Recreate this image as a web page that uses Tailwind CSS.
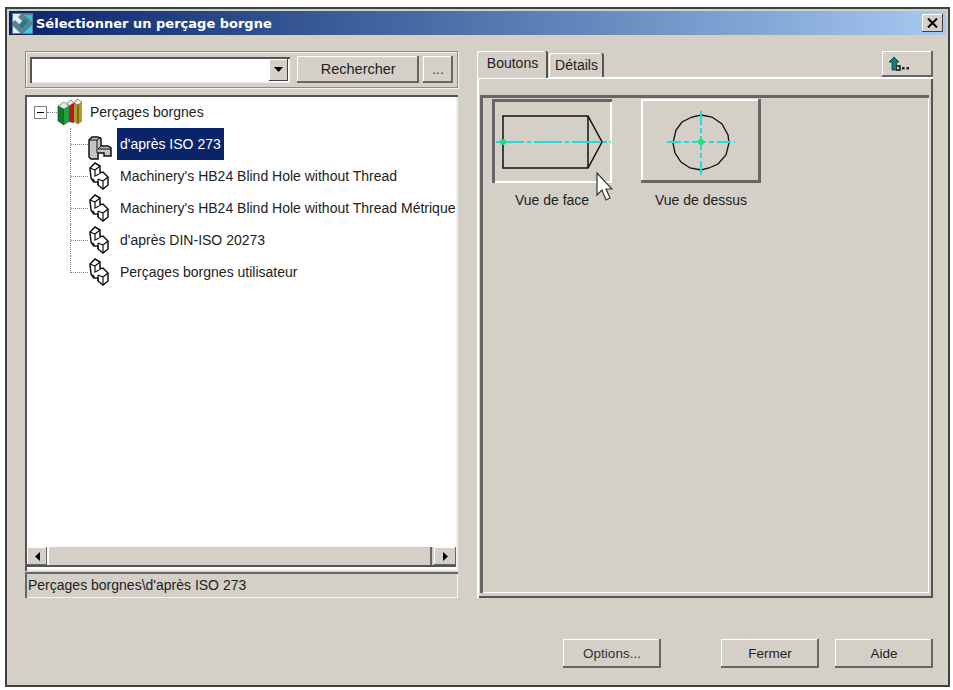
<!DOCTYPE html>
<html lang="fr">
<head>
  <meta charset="UTF-8" />
  <title>Sélectionner un perçage borgne</title>
  <script src="https://cdn.jsdelivr.net/npm/@tailwindcss/browser@4"></script>
</head>
<body class="bg-white w-[953px] h-[690px] overflow-hidden font-['Liberation_Sans',sans-serif] text-[14px] text-[#222]">
  <div class="ml-[5px] mt-[7px] w-[945px] h-[680px] bg-[#d4d0c8] border-2 border-[#404040] flex flex-col relative">

    <!-- barre de titre -->
    <div class="mx-[2px] mt-[2px] h-[24px] shrink-0 bg-gradient-to-r from-[#0a246a] to-[#a6caf0] flex items-center pl-[3px] pr-[2px]">
      <svg width="21" height="21" viewBox="0 0 21 21" class="shrink-0">
        <rect width="21" height="21" fill="#5a8098"/>
        <path d="M1 1H9L6 4L10 8L7 11L3 7L1 9Z" fill="#e8f0f0"/>
        <path d="M7 12L13 6L16 9L10 15Z" fill="#1f7f80"/>
        <path d="M12 2H20V9L17 6Z" fill="#30c8c8"/>
        <path d="M1 13L8 20H1Z" fill="#e8f0f0"/>
        <path d="M12 20L20 12V20Z" fill="#30d8dc"/>
      </svg>
      <span class="ml-[3px] font-['DejaVu_Sans',sans-serif] font-bold text-[13px] text-white leading-none whitespace-nowrap">Sélectionner un perçage borgne</span>
      <button class="ml-auto mr-[1px] w-[21px] h-[18px] bg-[#d4d0c8] shadow-[inset_-1px_-1px_0_#404040,inset_1px_1px_0_#fff] flex items-center justify-center">
        <svg width="11" height="10" viewBox="0 0 11 10"><path d="M1 0.5L10 9.5M10 0.5L1 9.5" stroke="#000" stroke-width="2"/></svg>
      </button>
    </div>

    <div class="flex pl-[18px] pr-[15px] pt-[16px] gap-[19px] h-[563px] shrink-0">
      <!-- colonne gauche -->
      <div class="w-[433px] flex flex-col">
        <div class="h-[37px] border border-[#8c8a84] shadow-[inset_1px_1px_0_#f4f2ee,1px_1px_0_#f4f2ee] flex items-center pl-[4px] pr-[4px]">
          <div class="w-[261px] h-[26px] bg-white shadow-[inset_2px_2px_0_#555,inset_-1px_-1px_0_#eee] flex justify-end items-center pr-[2px]">
            <div class="w-[19px] h-[22px] bg-[#d4d0c8] shadow-[inset_-1px_-1px_0_#404040,inset_1px_1px_0_#fff] flex items-center justify-center">
              <svg width="9" height="5" viewBox="0 0 9 5"><path d="M0 0H9L4.5 5Z" fill="#000"/></svg>
            </div>
          </div>
          <button class="ml-[7px] w-[122px] h-[27px] bg-[#d4d0c8] shadow-[inset_-2px_-2px_0_#666,inset_1px_1px_0_#fff] text-center text-[14.5px]">Rechercher</button>
          <button class="ml-[4px] w-[30px] h-[27px] bg-[#d4d0c8] shadow-[inset_-2px_-2px_0_#666,inset_1px_1px_0_#fff] text-center text-[#444]">...</button>
        </div>

        <!-- arbre -->
        <div class="mt-[7px] h-[476px] bg-white shadow-[inset_2px_2px_0_#555,inset_-2px_-2px_0_#f0eeea] flex flex-col pt-[1px] pl-[2px] pr-[2px] pb-[4px]">
          <div class="flex-1 overflow-hidden">
            <div class="h-[32px] flex items-center">
              <div class="ml-[7px] w-[13px] h-[13px] border border-[#808080] flex items-center justify-center shrink-0">
                <div class="w-[7px] h-[1px] bg-black"></div>
              </div>
              <div class="w-[10px] border-t border-dotted border-[#808080]"></div>
              <svg width="26" height="28" viewBox="0 0 26 28" class="shrink-0">
                <path d="M1 8L7 11V27L1 23Z" fill="#0e7d2a" stroke="#1a3a1a" stroke-width=".6"/>
                <path d="M7 11L12 8V24L7 27Z" fill="#1fa03a"/>
                <path d="M1 8L7 4L12 8L7 11Z" fill="#e8e8e0" stroke="#333" stroke-width=".5"/>
                <path d="M12 8L14 3L17 5V25L12 24Z" fill="#b5182a"/>
                <path d="M10 5L14 2L17 5L12 8Z" fill="#f0e8e0" stroke="#333" stroke-width=".5"/>
                <path d="M17 6L20 1L25 5V24L20 26L17 24Z" fill="#b89a28"/>
                <path d="M17 5L20 1L25 4L21 7Z" fill="#f4eed8" stroke="#333" stroke-width=".5"/>
                <path d="M21 7V26" stroke="#4a3a10" stroke-width="1"/>
              </svg>
              <span class="ml-[7px] whitespace-nowrap">Perçages borgnes</span>
            </div>

            <div class="h-[32px] flex items-center">
              <div class="ml-[43px] w-[1px] h-full border-l border-dotted border-[#808080]"></div>
              <div class="w-[17px] border-t border-dotted border-[#808080]"></div>
              <svg width="24" height="24" viewBox="0 0 24 24" class="shrink-0 mt-[7px]">
                <path d="M1 4L4 1H10L13 3V10H20L23 12V20H16V17H10V23H3L1 21Z" fill="#c4c4c4" stroke="#111" stroke-width="1.500"/>
                <path d="M1 4H9L13 1M9 4V17M13 10L10 13H23" fill="none" stroke="#111"/>
              </svg>
              <span class="ml-[5px] h-[32px] flex items-center px-[3px] bg-[#0a246a] text-white whitespace-nowrap">d'après ISO 273</span>
            </div>

            <div class="h-[32px] flex items-center">
              <div class="ml-[43px] w-[1px] h-full border-l border-dotted border-[#808080]"></div>
              <div class="w-[17px] border-t border-dotted border-[#808080]"></div>
              <svg width="21" height="28" viewBox="0 0 21 28" class="shrink-0">
                <path d="M2 6L7 1L12 4V11L15 10L20 15V23L15 27L10 23V20H6L3 16Z" fill="#fff" stroke="#111" stroke-width="1.500"/>
                <path d="M2 6L7 8L12 4M7 8V14L11 12M10 17L15 19L20 15M15 19V27M10 17V23" fill="none" stroke="#111" stroke-width="1.200"/>
                <path d="M3 16L7 18L5 20Z" fill="#111"/>
              </svg>
              <span class="ml-[11px] whitespace-nowrap">Machinery's HB24 Blind Hole without Thread</span>
            </div>

            <div class="h-[32px] flex items-center">
              <div class="ml-[43px] w-[1px] h-full border-l border-dotted border-[#808080]"></div>
              <div class="w-[17px] border-t border-dotted border-[#808080]"></div>
              <svg width="21" height="28" viewBox="0 0 21 28" class="shrink-0">
                <path d="M2 6L7 1L12 4V11L15 10L20 15V23L15 27L10 23V20H6L3 16Z" fill="#fff" stroke="#111" stroke-width="1.500"/>
                <path d="M2 6L7 8L12 4M7 8V14L11 12M10 17L15 19L20 15M15 19V27M10 17V23" fill="none" stroke="#111" stroke-width="1.200"/>
                <path d="M3 16L7 18L5 20Z" fill="#111"/>
              </svg>
              <span class="ml-[11px] whitespace-nowrap">Machinery's HB24 Blind Hole without Thread Métrique</span>
            </div>

            <div class="h-[32px] flex items-center">
              <div class="ml-[43px] w-[1px] h-full border-l border-dotted border-[#808080]"></div>
              <div class="w-[17px] border-t border-dotted border-[#808080]"></div>
              <svg width="21" height="28" viewBox="0 0 21 28" class="shrink-0">
                <path d="M2 6L7 1L12 4V11L15 10L20 15V23L15 27L10 23V20H6L3 16Z" fill="#fff" stroke="#111" stroke-width="1.500"/>
                <path d="M2 6L7 8L12 4M7 8V14L11 12M10 17L15 19L20 15M15 19V27M10 17V23" fill="none" stroke="#111" stroke-width="1.200"/>
                <path d="M3 16L7 18L5 20Z" fill="#111"/>
              </svg>
              <span class="ml-[11px] whitespace-nowrap">d'après DIN-ISO 20273</span>
            </div>

            <div class="h-[32px] flex items-center">
              <div class="ml-[43px] w-[18px] h-[17px] self-start border-l border-b border-dotted border-[#808080]"></div>
              <svg width="21" height="28" viewBox="0 0 21 28" class="shrink-0">
                <path d="M2 6L7 1L12 4V11L15 10L20 15V23L15 27L10 23V20H6L3 16Z" fill="#fff" stroke="#111" stroke-width="1.500"/>
                <path d="M2 6L7 8L12 4M7 8V14L11 12M10 17L15 19L20 15M15 19V27M10 17V23" fill="none" stroke="#111" stroke-width="1.200"/>
                <path d="M3 16L7 18L5 20Z" fill="#111"/>
              </svg>
              <span class="ml-[11px] whitespace-nowrap">Perçages borgnes utilisateur</span>
            </div>
          </div>

          <!-- ascenseur horizontal -->
          <div class="h-[20px] shrink-0 bg-[#d4d0c8] flex border-b-2 border-[#555]">
            <div class="w-[20px] bg-[#d4d0c8] shadow-[inset_-1px_-1px_0_#666,inset_1px_1px_0_#fff] flex items-center justify-center">
              <svg width="5" height="9" viewBox="0 0 5 9"><path d="M5 0V9L0 4.5Z" fill="#000"/></svg>
            </div>
            <div class="flex-1 shadow-[inset_-2px_0_0_#666,inset_2px_0_0_#fff]"></div>
            <div class="w-[22px] ml-[2px] bg-[#d4d0c8] shadow-[inset_-1px_-1px_0_#666,inset_1px_1px_0_#fff] flex items-center justify-center">
              <svg width="5" height="9" viewBox="0 0 5 9"><path d="M0 0V9L5 4.5Z" fill="#000"/></svg>
            </div>
          </div>
        </div>

        <div class="mt-[1px] h-[26px] shrink-0 shadow-[inset_2px_2px_0_#666,inset_-1px_-1px_0_#f4f2ee] flex items-center pl-[3px]">Perçages borgnes\d'après ISO 273</div>
      </div>

      <!-- colonne droite -->
      <div class="w-[456px] flex flex-col">
        <div class="h-[27px] shrink-0 flex items-start">
          <div class="w-[71px] h-[27px] bg-[#d4d0c8] rounded-t-[2px] shadow-[inset_-2px_0_0_#555,inset_1px_1px_0_#fff] flex items-center justify-center pb-[3px] relative z-10">Boutons</div>
          <div class="mt-[2px] ml-[1px] w-[55px] h-[24px] rounded-t-[2px] shadow-[inset_-2px_0_0_#555,inset_1px_1px_0_#fff] flex items-center justify-center">Détails</div>
          <button class="ml-auto w-[51px] h-[26px] bg-[#d4d0c8] shadow-[inset_-2px_-2px_0_#666,inset_1px_1px_0_#fff] flex items-center justify-start pl-[6px]">
            <svg width="24" height="16" viewBox="0 0 24 16">
              <path d="M6 1L11 6H8.500V14H4V6H1Z" fill="#0d7f80" stroke="#063a3a" stroke-width=".8"/>
              <path d="M8 14H12V10H9" fill="none" stroke="#111" stroke-width="1.500"/>
              <rect x="14" y="11" width="2.500" height="2.500" fill="#222"/>
              <rect x="18.500" y="11" width="2.500" height="2.500" fill="#222"/>
            </svg>
          </button>
        </div>
        <div class="flex-1 -mt-[1px] shadow-[inset_2px_2px_0_#fff,inset_-2px_-2px_0_#555] p-[3px_4px_5px_3px] pt-[18px]">
          <div class="h-full shadow-[inset_3px_3px_0_#666,inset_-1px_-1px_0_#fff] pl-[12px] pt-[4px] flex gap-[29px]">
            <div class="w-[120px] flex flex-col items-center">
              <div class="w-[120px] h-[84px] shadow-[inset_3px_3px_0_#666,inset_-2px_-2px_0_#fff] flex items-center justify-center">
                <svg width="120" height="84" viewBox="0 0 120 84">
                  <path d="M11 17H96L110 43L96 69H11Z" fill="none" stroke="#111" stroke-width="1.500"/>
                  <path d="M96 17V69" stroke="#111" stroke-width="1.500"/>
                  <path d="M4 43H119" stroke="#22dcd8" stroke-width="2" stroke-dasharray="28 3 4 3"/>
                  <circle cx="11" cy="43" r="3" fill="#22e070"/>
                </svg>
              </div>
              <span class="mt-[7px] text-center">Vue de face</span>
            </div>
            <div class="w-[120px] flex flex-col items-center">
              <div class="w-[120px] h-[84px] shadow-[inset_-3px_-3px_0_#666,inset_2px_2px_0_#fff] flex items-center justify-center">
                <svg width="120" height="84" viewBox="0 0 120 84">
                  <path d="M60 16L71 18L81 25L87 36L88 44L85 56L77 65L68 69L60 71L49 69L40 63L34 54L32 44L35 31L41 23L51 18Z" fill="none" stroke="#111" stroke-width="1.300"/>
                  <path d="M26 43H94M60 12V76" stroke="#22dcd8" stroke-width="2" stroke-dasharray="14 3 5 3"/>
                  <circle cx="60" cy="43" r="3" fill="#22e070"/>
                </svg>
              </div>
              <span class="mt-[7px] text-center">Vue de dessus</span>
            </div>
          </div>
        </div>
      </div>
    </div>

    <!-- boutons du bas -->
    <div class="flex pr-[15px] pt-[41px] text-[13.5px]">
      <button class="ml-[556px] w-[98px] h-[29px] pt-[1px] bg-[#d4d0c8] shadow-[inset_-2px_-2px_0_#666,inset_1px_1px_0_#fff] text-[#333]">Options...</button>
      <button class="ml-[60px] w-[98px] h-[29px] pt-[1px] bg-[#d4d0c8] shadow-[inset_-2px_-2px_0_#666,inset_1px_1px_0_#fff]">Fermer</button>
      <button class="ml-[16px] w-[98px] h-[29px] pt-[1px] bg-[#d4d0c8] shadow-[inset_-2px_-2px_0_#666,inset_1px_1px_0_#fff]">Aide</button>
    </div>

    <!-- curseur de la souris -->
    <svg width="17" height="30" viewBox="0 0 17 30" class="absolute left-[589px] top-[163px]">
      <path d="M1 1V23L6 18L10 28L14 26L10 17H16Z" fill="#fff" stroke="#333" stroke-width="1.200"/>
    </svg>
  </div>
</body>
</html>
